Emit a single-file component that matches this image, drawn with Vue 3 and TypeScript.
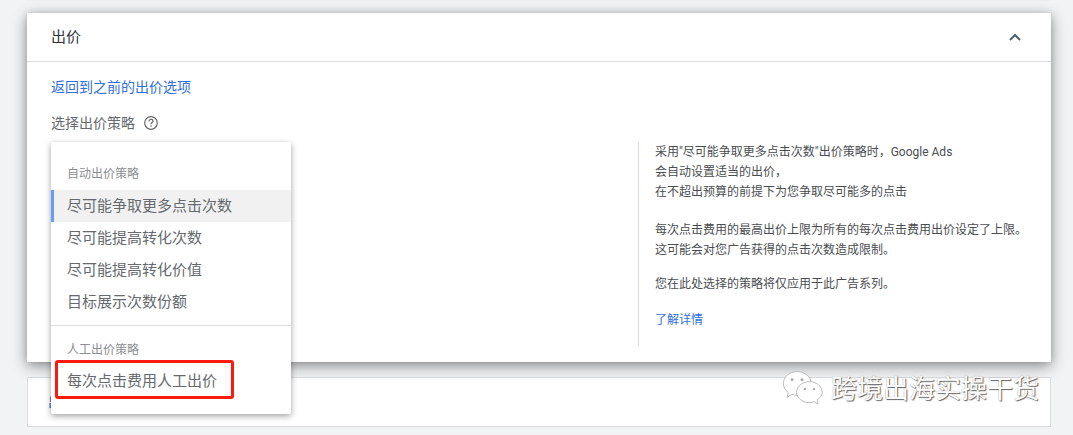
<script setup lang="ts">
const autoItems: string[] = ['尽可能争取更多点击次数', '尽可能提高转化次数', '尽可能提高转化价值', '目标展示次数份额']
</script>

<template>
  <div class="page">
    <div class="top-sliver"></div>
    <section class="card">
      <header class="card-head">
        <span class="title">出价</span>
        <svg class="chev" width="14" height="10" viewBox="0 0 14 10"><path d="M2 8 L7 3 L12 8" fill="none" stroke="#4f6070" stroke-width="2" /></svg>
      </header>
      <div class="card-body">
        <a class="link back">返回到之前的出价选项</a>
        <div class="label-row">
          <span>选择出价策略</span>
          <svg width="16" height="16" viewBox="0 0 16 16" class="help">
            <circle cx="8" cy="8" r="6.300" fill="none" stroke="#6a6a6a" stroke-width="1.200" />
            <path d="M6 6.400 C6 5 7 4.400 8 4.400 C9.100 4.400 10 5.100 10 6.200 C10 7.600 8 7.600 8 9.300" fill="none" stroke="#6a6a6a" stroke-width="1.200" />
            <rect x="7.400" y="10.400" width="1.300" height="1.300" fill="#6a6a6a" />
          </svg>
        </div>
        <div class="columns">
          <div class="left-space"></div>
          <aside class="info">
            <p>采用"尽可能争取更多点击次数"出价策略时，Google Ads<br />会自动设置适当的出价，<br />在不超出预算的前提下为您争取尽可能多的点击</p>
            <p class="second">每次点击费用的最高出价上限为所有的每次点击费用出价设定了上限。<br />这可能会对您广告获得的点击次数造成限制。</p>
            <p class="third">您在此处选择的策略将仅应用于此广告系列。</p>
            <a class="link more">了解详情</a>
          </aside>
        </div>
      </div>
    </section>
    <section class="lower"><span class="lower-text">出</span></section>

    <div class="menu">
      <div class="group-label first">自动出价策略</div>
      <div
        v-for="(item, i) in autoItems"
        :key="item"
        class="item"
        :class="{ active: i === 0 }"
      >{{ item }}</div>
      <div class="divider"></div>
      <div class="group-label second-label">人工出价策略</div>
      <div class="item">每次点击费用人工出价</div>
      <div class="redbox"></div>
    </div>

    <div class="watermark">
      <svg width="42" height="38" viewBox="0 0 46 40">
        <path d="M17 2 C8 2 1.500 8 1.500 15 C1.500 19 3.500 22.500 7 25 L5.500 30 L11 27 C13 27.800 15 28 17 28 C25 28 32 22 32 15 C32 8 25 2 17 2 Z" fill="#fff" stroke="#b5b5b5" stroke-width="1" />
        <circle cx="11" cy="11" r="1.600" fill="#aaa" />
        <circle cx="22" cy="11" r="1.600" fill="#aaa" />
        <path d="M30 13 C22 13 16 18.500 16 24.500 C16 30.500 22 36 30 36 C32 36 33.500 35.600 35 35 L39.500 37.500 L38.500 33 C41.500 31 44 28 44 24.500 C44 18.500 38 13 30 13 Z" fill="#fff" stroke="#b5b5b5" stroke-width="1" />
        <circle cx="25" cy="21" r="1.300" fill="#aaa" />
        <circle cx="35" cy="21" r="1.300" fill="#aaa" />
      </svg>
      <span class="wm-text">跨境出海实操干货</span>
    </div>
  </div>
</template>

<style>
html, body { margin: 0; padding: 0; background: #f1f3f4; }
</style>

<style scoped>
.page {
  position: relative;
  width: 1073px;
  height: 435px;
  overflow: hidden;
  background: #f1f3f4;
  font-family: Roboto, "Noto Sans CJK SC", sans-serif;
  color: #3c4043;
  padding: 0 22px 0 27px;
  box-sizing: border-box;
}
.top-sliver {
  height: 1px;
  margin-bottom: 12px;
  background: #eceef0;
}
.card {
  height: 349px;
  background: #fff;
  box-shadow: 0 4px 14px rgba(0, 0, 0, 0.42), 0 0 6px rgba(0, 0, 0, 0.12);
  position: relative;
  z-index: 1;
}
.card-head {
  height: 49px;
  box-sizing: border-box;
  border-bottom: 1px solid #dadce0;
  display: flex;
  align-items: center;
  justify-content: space-between;
  padding: 0 29px 0 24px;
}
.title { font-size: 15px; line-height: 21px; color: #30343a; }
.chev { display: block; }
.card-body { padding: 16px 0 0 24px; }
.link { color: #2f6fde; font-size: 14px; line-height: 18px; display: block; }
.label-row {
  display: flex;
  align-items: center;
  gap: 8px;
  margin-top: 18px;
  font-size: 14px;
  line-height: 18px;
  color: #666a6e;
}
.help { display: block; }
.columns { display: flex; margin-top: 10px; }
.left-space { width: 587px; flex: none; }
.info {
  height: 204px;
  box-sizing: border-box;
  border-left: 1px solid #dadce0;
  padding-left: 16px;
  font-size: 12px;
  line-height: 20px;
  color: #4a4d50;
}
.info p { margin: 0; }
.info .second { margin-top: 18px; }
.info .third { margin-top: 14px; }
.info .more { margin-top: 16px; font-size: 12px; line-height: 20px; }
.lower {
  height: 50px;
  margin-top: 15px;
  background: #fff;
  border: 1px solid #dadce0;
  box-sizing: border-box;
  padding: 13px 0 0 20px;
}
.lower-text { color: #1a73e8; font-size: 14px; }
.menu {
  position: absolute;
  left: 51px;
  top: 142px;
  width: 240px;
  height: 272px;
  box-sizing: border-box;
  padding-top: 23px;
  background: #fff;
  border-radius: 2px;
  box-shadow: 0 2px 6px rgba(0, 0, 0, 0.38);
  z-index: 2;
}
.group-label {
  height: 18px;
  line-height: 18px;
  padding-left: 16px;
  font-size: 12px;
  color: #8a8e92;
}
.group-label.first { margin-bottom: 7px; }
.item {
  height: 32px;
  line-height: 32px;
  padding-left: 16px;
  font-size: 15px;
  color: #666a6e;
}
.item.active {
  background: #f1f1f1;
  box-shadow: inset 3px 0 0 #669df6;
}
.divider {
  height: 1px;
  background: #dadce0;
  margin: 7px 0 15px;
}
.second-label { margin-bottom: 6px; }
.redbox {
  position: absolute;
  left: 4px;
  top: 218px;
  width: 179px;
  height: 39px;
  box-sizing: border-box;
  border: 3px solid #fb1a10;
  border-radius: 3px;
}
.watermark {
  position: absolute;
  left: 782px;
  top: 367px;
  z-index: 3;
  display: flex;
  align-items: center;
  gap: 7px;
  font-size: 26px;
  color: #fff;
  line-height: 40px;
  text-shadow: 1px 1px 1px #666, 0 0 1px #888;
}
.wm-text { margin-top: 2px; }
.watermark svg { display: block; }
</style>
